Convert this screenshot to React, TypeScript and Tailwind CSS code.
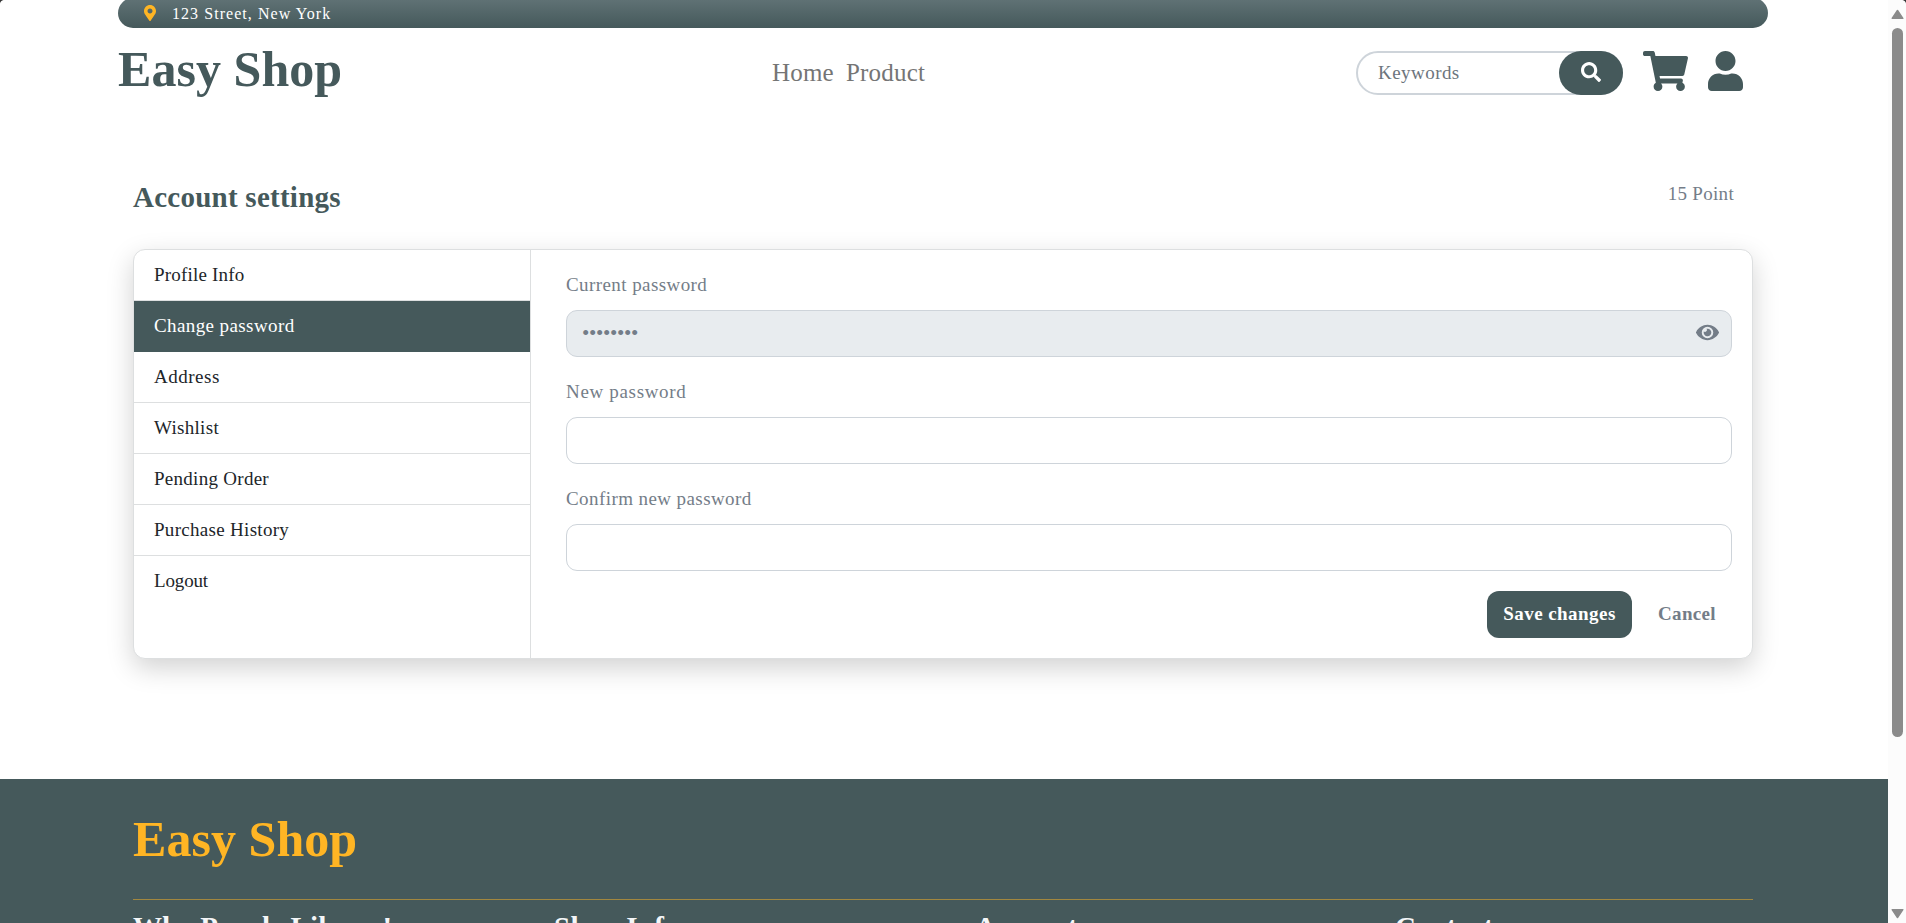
import React from "react";
import { FaEye, FaMapMarkerAlt, FaSearch, FaShoppingCart, FaUser } from "react-icons/fa";

const menu = [
  { label: "Profile Info", spacing: "tracking-[0.2px]" },
  { label: "Change password", spacing: "tracking-[0.4px]", active: true },
  { label: "Address", spacing: "tracking-[0.5px]" },
  { label: "Wishlist", spacing: "tracking-[0.3px]" },
  { label: "Pending Order", spacing: "tracking-[0.28px]" },
  { label: "Purchase History", spacing: "tracking-[0.3px]" },
  { label: "Logout", spacing: "tracking-[-0.15px]" },
];

const footerColumns = [
  { title: "Why People Like us!", spacing: "tracking-[0.12px]" },
  { title: "Shop Info", spacing: "tracking-[0.4px]" },
  { title: "Account", spacing: "tracking-[-0.1px]" },
  { title: "Contact", spacing: "tracking-[0px]" },
];

function TopBar() {
  return (
    <div className="ml-[118px] h-7 w-[1650px] overflow-hidden">
      <div className="-mt-0.5 flex h-[30px] items-center rounded-[15px] bg-linear-to-b from-[#617376] to-[#45595b] pl-[26px]">
        <FaMapMarkerAlt className="h-4 w-3 text-[#ffb524]" />
        <span className="mt-0.5 ml-[16px] text-[16px] leading-none tracking-[1.05px] text-white">
          123 Street, New York
        </span>
      </div>
    </div>
  );
}

function Header() {
  return (
    <header className="ml-[118px] grid h-[90px] w-[1650px] grid-cols-[654px_1fr_auto] items-center">
      <h1 className="mb-[8px] text-[50px] leading-[60px] font-bold tracking-[0.05px] text-[#45595b]">
        Easy Shop
      </h1>
      <nav className="flex gap-[12px] text-[25px] leading-9 tracking-[0.2px] text-[#757575]">
        <a>Home</a>
        <a>Product</a>
      </nav>
      <div className="flex items-center pr-[25px]">
        <div className="flex h-11 w-[267px] items-center rounded-full border-2 border-[#ced4da] pl-5">
          <span className="mb-0.5 flex-1 text-[19px] leading-none tracking-[0.45px] text-[#6c757d]">Keywords</span>
          <button className="-mr-0.5 flex h-11 w-16 items-center justify-center rounded-full bg-[#45595b] text-white">
            <FaSearch className="mb-[3px] size-5" />
          </button>
        </div>
        <FaShoppingCart className="mb-1 ml-5 h-10 w-[45px] text-[#45595b]" />
        <FaUser className="mb-1 ml-5 h-10 w-[35px] text-[#45595b]" />
      </div>
    </header>
  );
}

function Field({ label, spacing, filled }: { label: string; spacing: string; filled?: boolean }) {
  return (
    <div>
      <div className={"text-[19px] leading-[26px] text-[#747d88] " + spacing}>{label}</div>
      <div
        className={
          "mt-3 flex h-[47px] items-center justify-between rounded-[11px] border border-[#ced4da] pr-3 pl-[15px] text-[#747d88] " +
          (filled ? "bg-[#e8ecef]" : "bg-white")
        }
      >
        {filled && (
          <>
            <span className="mb-px text-[21px] leading-none tracking-[-0.35px]">••••••••</span>
            <FaEye className="mb-0.5 h-[21px] w-[23px]" />
          </>
        )}
      </div>
    </div>
  );
}

function Settings() {
  return (
    <main className="ml-[133px] w-[1620px] pt-[61px]">
      <div className="flex h-[70px] justify-between pr-[19px] text-[#747d88]">
        <h2 className="text-[29px] leading-9 font-bold tracking-[0.25px] text-[#45595b]">Account settings</h2>
        <span className="text-[19px] leading-[30px] tracking-[0.3px]">15 Point</span>
      </div>
      <div className="flex h-[410px] overflow-hidden rounded-[12px] border border-[#dddfe0] bg-white shadow-[0_9px_27px_rgba(0,0,0,0.18)]">
        <aside className="w-[397px] border-r border-[#dddfe0]">
          {menu.map((item, i) => (
            <div
              key={item.label}
              className={
                "h-[51px] pl-5 text-[19px] leading-[50px] " +
                item.spacing +
                (item.active ? " bg-[#45595b] text-white" : " text-[#212529]") +
                (i < menu.length - 1 && !item.active ? " border-b border-[#dddfe0]" : "")
              }
            >
              {item.label}
            </div>
          ))}
        </aside>
        <section className="flex-1 pt-[22px] pr-5 pl-[35px]">
          <div className="flex flex-col gap-[22px]">
            <Field label="Current password" spacing="tracking-[0.42px]" filled />
            <Field label="New password" spacing="tracking-[0.67px]" />
            <Field label="Confirm new password" spacing="tracking-[0.42px]" />
          </div>
          <div className="mt-5 flex justify-end gap-[10px] text-[19px] font-bold">
            <button className="h-[47px] w-[145px] rounded-[12px] bg-[#45595b] tracking-[0.45px] text-white">
              Save changes
            </button>
            <button className="h-[47px] w-[90px] tracking-[0.35px] text-[#747d88]">Cancel</button>
          </div>
        </section>
      </div>
    </main>
  );
}

function Footer() {
  return (
    <footer className="mt-[120px] h-[144px] overflow-hidden bg-[#45595b]">
      <div className="ml-[133px] w-[1620px]">
        <div className="h-[121px] border-b border-[#ffb524]/50 pt-[30px]">
          <div className="text-[50px] leading-[60px] font-bold tracking-[0.05px] text-[#ffb524]">Easy Shop</div>
        </div>
        <div className="mt-[9px] grid grid-cols-[421px_421px_420px_1fr] text-[29px] leading-9 font-bold whitespace-nowrap text-[#f4f6f8]">
          {footerColumns.map((column) => (
            <h3 key={column.title} className={column.spacing}>
              {column.title}
            </h3>
          ))}
        </div>
      </div>
    </footer>
  );
}

function Scrollbar() {
  return (
    <div className="flex w-[18px] flex-col items-center bg-[#fcfcfc] pt-[9px] pb-[4px]">
      <svg className="ml-px h-[11px] w-[13px] shrink-0" viewBox="0 0 13 11">
        <path d="M6.5 1.5 11.8 9.3H1.2Z" fill="#8b8b8b" stroke="#8b8b8b" strokeWidth="1.5" strokeLinejoin="round" />
      </svg>
      <div className="mt-2 ml-px h-[709px] w-[11px] shrink-0 rounded-full bg-[#8b8b8b]" />
      <svg className="mt-auto ml-px h-[11px] w-[13px] shrink-0" viewBox="0 0 13 11">
        <path d="M6.5 9.5 11.8 1.7H1.2Z" fill="#8b8b8b" stroke="#8b8b8b" strokeWidth="1.5" strokeLinejoin="round" />
      </svg>
    </div>
  );
}

export default function App() {
  return (
    <div className="relative flex h-[923px] w-[1906px] overflow-hidden bg-white font-['Liberation_Serif',serif]">
      <div className="w-[1888px]">
        <TopBar />
        <Header />
        <Settings />
        <Footer />
      </div>
      <Scrollbar />
      <svg className="absolute top-0 left-0 size-1" viewBox="0 0 4 4">
        <path d="M0 0H3.5Q.5 .5 0 3.5Z" fill="#333" />
      </svg>
      <svg className="absolute top-0 right-0 size-1" viewBox="0 0 4 4">
        <path d="M4 0H.5Q3.5 .5 4 3.5Z" fill="#333" />
      </svg>
    </div>
  );
}
